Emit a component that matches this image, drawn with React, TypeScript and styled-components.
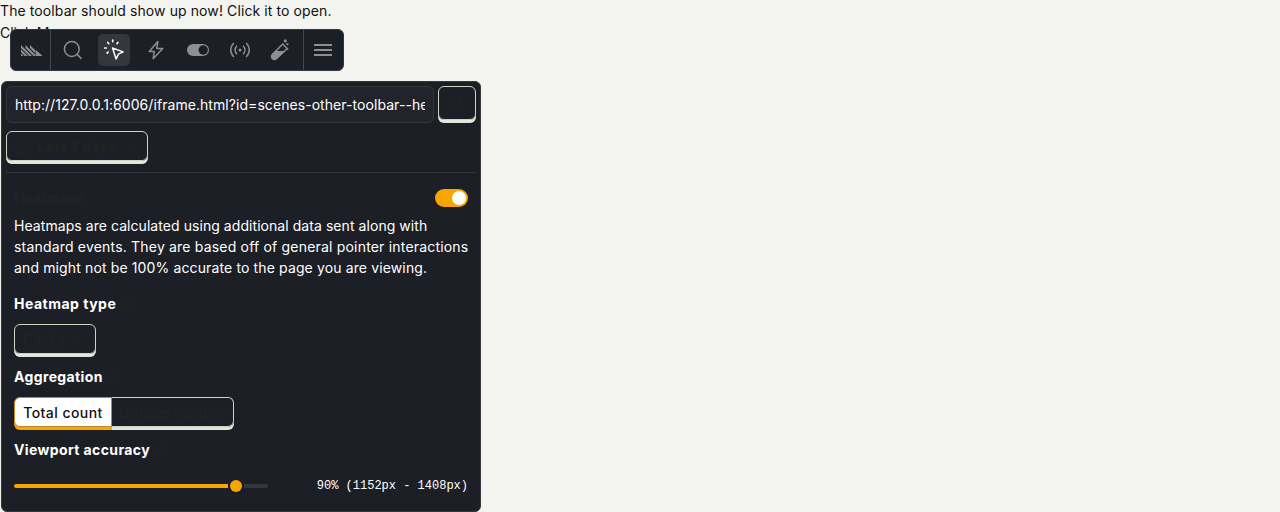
import React from 'react';
import styled, { createGlobalStyle, css } from 'styled-components';

const ink = '#242322';

const GlobalStyle = createGlobalStyle`
  *, *::before, *::after { box-sizing: border-box; }
  html, body { margin: 0; height: 100%; overflow: hidden; background: #f3f4ef; }
  body { font-family: Inter, 'Liberation Sans', sans-serif; font-size: 14px; line-height: 21px; color: #111; }
  button, input { font: inherit; color: inherit; margin: 0; background: none; border: 0; padding: 0; }
  svg { display: block; flex: none; }
`;

const Page = styled.main`
  position: relative;
  height: 512px;
`;

const Message = styled.div`
  line-height: 22px;
  height: 22px;
  letter-spacing: 0.1px;
`;

const PlainButton = styled.button`
  display: block;
  line-height: 22px;
`;

const Toolbar = styled.nav`
  position: absolute;
  left: 10px;
  top: 29px;
  width: 334px;
  height: 42px;
  display: flex;
  background: #1d1f27;
  border: 1px solid #35373e;
  border-radius: 6px;
  color: #8e8f93;
`;

const ToolbarGroup = styled.div<{ $side?: 'start' | 'end' }>`
  display: flex;
  flex: ${(p) => (p.$side ? '0 0 40px' : '1')};
  ${(p) => p.$side === 'start' && css`border-right: 1px solid #45474d; padding-left: 2px;`}
  ${(p) => p.$side === 'end' && css`border-left: 1px solid #45474d; padding-right: 2px;`}
`;

const ToolbarButton = styled.button<{ $active?: boolean }>`
  flex: 1;
  display: flex;
  align-items: center;
  justify-content: center;
  color: ${(p) => (p.$active ? '#fff' : 'inherit')};
`;

const ToolbarIcon = styled.span<{ $active?: boolean }>`
  display: flex;
  align-items: center;
  justify-content: center;
  width: 32px;
  height: 32px;
  border-radius: 5px;
  background: ${(p) => (p.$active ? '#35373e' : 'transparent')};
`;

const Panel = styled.section`
  position: absolute;
  left: 1px;
  top: 81px;
  width: 480px;
  height: 431px;
  padding: 4px;
  background: #1d1f27;
  border: 1px solid #35373e;
  border-radius: 6px;
  color: #fff;
`;

const UrlRow = styled.div`
  display: flex;
  gap: 4px;
  height: 37px;
  margin-bottom: 8px;
`;

const UrlInput = styled.input`
  flex: 1;
  min-width: 0;
  height: 37px;
  padding: 0 8px;
  background: #22242c;
  border: 1px solid #35373e;
  border-radius: 6px;
  letter-spacing: 0.06px;
`;

const Button = styled.button<{ $w: number; $h?: number; $bold?: boolean }>`
  display: flex;
  align-items: center;
  width: ${(p) => p.$w}px;
  height: ${(p) => p.$h ?? 30}px;
  padding: 0 8px;
  border: 1px solid #cfd3bf;
  border-radius: 6px;
  box-shadow: 0 3px 0 -0.5px #e5e7e0, 0 3px 0 0 #d9dccb;
  color: ${ink};
  font-weight: ${(p) => (p.$bold ? 600 : 500)};
  letter-spacing: ${(p) => (p.$bold ? 0.3 : 0.2)}px;
`;

const ButtonLabel = styled.span<{ $icon?: boolean }>`
  flex: 1;
  text-align: left;
  padding-left: ${(p) => (p.$icon ? 6 : 0)}px;
`;

const Filters = styled.div`
  height: 42px;
  border-bottom: 1px solid #35373e;
`;

const Body = styled.div`
  padding: 14px 8px 0;
`;

const TitleRow = styled.div`
  display: flex;
  justify-content: space-between;
  align-items: center;
  height: 21px;
  margin-bottom: 7px;
  color: ${ink};
  font-weight: 600;
  letter-spacing: 0.3px;
`;

const Switch = styled.span`
  display: flex;
  justify-content: flex-end;
  width: 33px;
  height: 18px;
  padding: 2px;
  border-radius: 9px;
  background: #f7a501;
  &::after {
    content: '';
    width: 14px;
    height: 14px;
    border-radius: 50%;
    background: #fff;
  }
`;

const Description = styled.p`
  margin: 0 -4px 15px 0;
  white-space: nowrap;
`;

const Tracked = styled.span<{ $spacing: number }>`
  letter-spacing: ${(p) => p.$spacing}px;
`;

const Heading = styled.h6`
  display: flex;
  align-items: center;
  gap: 5px;
  height: 21px;
  margin: 0 0 10px;
  font-size: 14px;
  font-weight: 700;
  color: #fff;
  svg { color: ${ink}; }
`;

const Field = styled.div`
  height: 73px;
`;

const Segments = styled.div`
  display: flex;
  height: 33px;
`;

const Segment = styled.button<{ $selected?: boolean }>`
  height: 30px;
  width: ${(p) => (p.$selected ? 98 : 122)}px;
  text-align: center;
  font-weight: 500;
  letter-spacing: 0.45px;
  color: ${ink};
  border: 1px solid #cfd3bf;
  border-left: 0;
  border-radius: 0 6px 6px 0;
  box-shadow: 0 3px 0 #e1e4d8;
  ${(p) =>
    p.$selected &&
    css`
      color: #111;
      background: #fff;
      border: 1px solid #c28926;
      border-radius: 6px 0 0 6px;
      box-shadow: 0 3px 0 #f7a501;
    `}
`;

const AccuracyRow = styled.div`
  display: flex;
  align-items: center;
  justify-content: space-between;
  height: 28px;
  padding-top: 3px;
`;

const Slider = styled.div`
  display: flex;
  align-items: center;
  width: 254px;
  height: 16px;
`;

const Track = styled.span<{ $filled?: boolean }>`
  flex: ${(p) => (p.$filled ? '0 0 214px' : '1')};
  height: 4px;
  border-radius: ${(p) => (p.$filled ? '2px 0 0 2px' : '0 2px 2px 0')};
  background: ${(p) => (p.$filled ? '#f7a501' : '#35373e')};
`;

const Thumb = styled.span`
  width: 12px;
  height: 12px;
  margin: 0 2px;
  border-radius: 50%;
  background: #f7a501;
`;

const Code = styled.code`
  padding-top: 2px;
  font-family: 'Liberation Mono', monospace;
  font-size: 12px;
`;

const stroke = { fill: 'none', stroke: 'currentColor', strokeWidth: 1.5 } as const;

const Logo = () => (
  <svg width="21" height="11" viewBox="0 0 21 11" fill="currentColor">
    <path d="M0 0l11 11H8L0 3zM0 4.300l6.700 6.700h-3L0 7.300zM0 8.600L2.400 11H0zM4.500 0l9.500 9.500V11h-1.500l-8-8zM9 0l5 5v3L9 3zM14.500 4.800l6.500 5.400v.8h-6.500z" />
  </svg>
);
const SearchIcon = () => (
  <svg width="20" height="20" viewBox="0 0 20 20" {...stroke}>
    <circle cx="9.800" cy="9" r="7.400" />
    <path d="M15.200 14.400l4.500 4.500" />
  </svg>
);
const CursorIcon = () => (
  <svg width="22" height="22" viewBox="0 0 22 22" {...stroke} strokeLinecap="round" strokeLinejoin="round">
    <path d="M9.500 9l10.600 3.900-4.700 2.300-2.300 4.700z" />
    <path d="M9.700 1v1.600M1.700 9h1.500M4.800 3.500l1 1.200M14.900 3.500l-1 1.200M5.100 13.100l-1 .9" strokeWidth="1.700" />
  </svg>
);
const BoltIcon = () => (
  <svg width="20" height="20" viewBox="0 0 20 20" {...stroke} strokeLinejoin="round">
    <path d="M11.800 1.500L3.300 11.400h5L7.200 18.700l9.500-10.300h-5.900z" />
  </svg>
);
const ToggleIcon = () => (
  <svg width="22" height="12" viewBox="0 0 22 12">
    <rect width="22" height="12" rx="6" fill="currentColor" />
    <circle cx="16.200" cy="6" r="4.700" fill="#1d1f27" />
  </svg>
);
const LiveIcon = () => (
  <svg width="22" height="16" viewBox="0 0 22 16" {...stroke}>
    <path d="M4.800 1C.8 5 .8 11 4.800 15M17.200 1c4 4 4 10 0 14M8 3.700c-2.500 2.500-2.500 6.100 0 8.600M14 3.700c2.500 2.500 2.500 6.100 0 8.600" />
    <circle cx="11" cy="8" r="1.500" fill="currentColor" stroke="none" />
  </svg>
);
const TestTubeIcon = () => (
  <svg width="24" height="22" viewBox="1 0 24 22" {...stroke}>
    <path d="M13.200 4.500l6 6M13.800 5L3.300 15.500a2.700 2.700 0 0 0 4 4L18.500 9.300" />
    <path d="M6 12h10.500L8 20a3.300 3.300 0 0 1-4.800-4.800z" fill="currentColor" stroke="none" />
    <circle cx="16.300" cy="1.900" r="1.600" fill="currentColor" stroke="none" />
    <circle cx="18.500" cy="5.200" r="1.100" fill="currentColor" stroke="none" />
  </svg>
);
const MenuIcon = () => (
  <svg width="18" height="12" viewBox="0 0 18 12" fill="currentColor">
    <path d="M0 0h18v2H0zM0 5h18v2H0zM0 10h18v2H0z" />
  </svg>
);
const WandIcon = () => (
  <svg width="18" height="18" viewBox="0 0 18 18" fill="none" stroke="currentColor" strokeWidth="1.2">
    <path d="M1.700 14.700L13 3.500l2.200 2.200L4 17zM10.800 5.700L13 7.900M5 2v3M3.500 3.500h3M9 1v2M15 10v3M13.500 11.500h3" />
  </svg>
);
const CalendarIcon = () => (
  <svg width="16" height="16" viewBox="0 0 16 16" fill="none" stroke="currentColor" strokeWidth="1.2">
    <rect x="1" y="1.500" width="14" height="13" rx="1.500" />
    <path d="M1 5h14M4 8h1.500M7.300 8h1.500M10.500 8H12M4 11h1.500M7.300 11h1.500" />
  </svg>
);
const ChevronIcon = () => (
  <svg width="16" height="6" viewBox="0 0 16 6" fill="none" stroke="currentColor" strokeWidth="1.300">
    <path d="M4.500 1L8 4.500 11.500 1" />
  </svg>
);
const InfoIcon = () => (
  <svg width="12" height="12" viewBox="0 0 12 12" fill="none" stroke="currentColor">
    <circle cx="6" cy="6" r="5.300" />
    <path d="M6 5v3.500M6 3v1" />
  </svg>
);

const tools = [
  { name: 'Inspect', icon: <SearchIcon /> },
  { name: 'Heatmap', icon: <CursorIcon />, active: true },
  { name: 'Actions', icon: <BoltIcon /> },
  { name: 'Feature flags', icon: <ToggleIcon /> },
  { name: 'Events', icon: <LiveIcon /> },
  { name: 'Experiments', icon: <TestTubeIcon /> },
];

export default function App() {
  return (
    <Page>
      <GlobalStyle />
      <Message>The toolbar should show up now! Click it to open.</Message>
      <PlainButton>Click Me</PlainButton>
      <Toolbar>
        <ToolbarGroup $side="start">
          <ToolbarButton aria-label="Logo"><Logo /></ToolbarButton>
        </ToolbarGroup>
        <ToolbarGroup>
          {tools.map((t) => (
            <ToolbarButton key={t.name} aria-label={t.name} $active={t.active}>
              <ToolbarIcon $active={t.active}>{t.icon}</ToolbarIcon>
            </ToolbarButton>
          ))}
        </ToolbarGroup>
        <ToolbarGroup $side="end">
          <ToolbarButton aria-label="Menu"><MenuIcon /></ToolbarButton>
        </ToolbarGroup>
      </Toolbar>
      <Panel>
        <UrlRow>
          <UrlInput readOnly value="http://127.0.0.1:6006/iframe.html?id=scenes-other-toolbar--heatmap" />
          <Button $w={38} $h={34} aria-label="Wildcard"><WandIcon /></Button>
        </UrlRow>
        <Filters>
          <Button $w={142} $bold><CalendarIcon /><ButtonLabel $icon>Last 7 days</ButtonLabel><ChevronIcon /></Button>
        </Filters>
        <Body>
          <TitleRow>Heatmaps<Switch role="switch" aria-checked="true" /></TitleRow>
          <Description>
            <Tracked $spacing={0.06}>Heatmaps are calculated using additional data sent along with</Tracked><br />
            <Tracked $spacing={0.19}>standard events. They are based off of general pointer interactions</Tracked><br />
            <Tracked $spacing={0.13}>and might not be 100% accurate to the page you are viewing.</Tracked>
          </Description>
          <Field>
            <Heading><Tracked $spacing={0.5}>Heatmap type</Tracked><InfoIcon /></Heading>
            <Button $w={82}><ButtonLabel>Clicks</ButtonLabel><ChevronIcon /></Button>
          </Field>
          <Field>
            <Heading><Tracked $spacing={0.37}>Aggregation</Tracked><InfoIcon /></Heading>
            <Segments>
              <Segment $selected>Total count</Segment>
              <Segment>Unique visitors</Segment>
            </Segments>
          </Field>
          <Heading><Tracked $spacing={0.38}>Viewport accuracy</Tracked><InfoIcon /></Heading>
          <AccuracyRow>
            <Slider><Track $filled /><Thumb /><Track /></Slider>
            <Code>90% (1152px - 1408px)</Code>
          </AccuracyRow>
        </Body>
      </Panel>
    </Page>
  );
}
